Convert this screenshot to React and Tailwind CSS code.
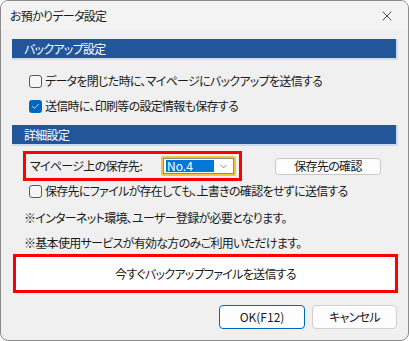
import { X, ChevronDown, Check } from "lucide-react";

const font = "[font-family:'Noto_Sans_CJK_JP','Noto_Sans',sans-serif] [font-feature-settings:'palt'] tracking-[-0.7px]";

function CheckBox({ checked }) {
  if (checked) {
    return (
      <span className="flex h-[13px] w-[13px] items-center justify-center rounded-[3px] bg-[#0067c0]">
        <Check className="h-[9px] w-[9px] text-white" strokeWidth={2} />
      </span>
    );
  }
  return <span className="h-[13px] w-[13px] rounded-[3px] border border-[#5a5a5a] bg-[#f6f6f6]" />;
}

function Row({ checked, label, className = "" }) {
  return (
    <div className={`flex h-[20px] items-center gap-[3px] pl-[17px] ${className}`}>
      <CheckBox checked={checked} />
      <span>{label}</span>
    </div>
  );
}

function SectionHeader({ title, className = "" }) {
  return (
    <div
      className={`flex h-[21px] items-start border-b-2 border-r-2 border-[#c9dcf2] ${className}`}
    >
      <div className="flex h-[19px] w-full items-center bg-[#23559a] pl-[12px] text-white">
        {title}
      </div>
    </div>
  );
}

export default function App() {
  return (
    <div
      className={`flex h-[341px] w-[409px] flex-col overflow-hidden rounded-[8px] border border-[#8c8c8c] bg-[#f0f0f0] text-[12px] leading-none text-[#1a1a1a] ${font}`}
    >
      <div className="flex h-[29px] items-center justify-between bg-[#f3f3f3] pl-[9px] pr-[13px]">
        <span>お預かりデータ設定</span>
        <X className="h-[16px] w-[16px] text-[#222]" strokeWidth={1.2} />
      </div>

      <div className="flex flex-col pl-[11px] pr-[10px]">
        <SectionHeader title="バックアップ設定" className="mt-[9px]" />
        <Row label="データを閉じた時に、マイページにバックアップを送信する" className="mt-[11px]" />
        <Row checked label="送信時に、印刷等の設定情報も保存する" className="mt-[5px]" />

        <SectionHeader title="詳細設定" className="mt-[9px]" />

        <div className="mt-[5px] flex items-center">
          <div className="ml-[11px] flex h-[30px] w-[219px] items-center justify-between border-[3px] border-[#ff0000] pl-[4px] pr-[3px]">
            <span>マイページ上の保存先:</span>
            <div className="flex h-[20px] w-[75px] items-center rounded-[2px] border-2 border-[#f7c440] bg-white">
              <div className="flex h-full w-full items-center border border-[#8a8a8a] pl-[2px] pr-[4px]">
                <span className="flex h-[12px] w-[48px] items-center bg-[#0078d7] pl-[1px] tracking-normal text-white">
                  No.4
                </span>
                <ChevronDown className="ml-auto h-[11px] w-[11px] text-[#555]" strokeWidth={1.5} />
              </div>
            </div>
          </div>
          <button className="ml-[33px] flex h-[17px] w-[106px] items-center justify-center rounded-[4px] border border-[#c8c8c8] bg-[#fdfdfd]">
            保存先の確認
          </button>
        </div>

        <Row label="保存先にファイルが存在しても、上書きの確認をせずに送信する" />

        <div className="mt-[7px] flex h-[20px] items-center pl-[12px]">
          ※インターネット環境、ユーザー登録が必要となります。
        </div>
        <div className="mt-[5px] flex h-[20px] items-center pl-[12px]">
          ※基本使用サービスが有効な方のみご利用いただけます。
        </div>

        <button className="ml-[1px] mt-[1px] flex h-[39px] w-[385px] items-center justify-center border-[3px] border-[#ff0000] bg-white">
          今すぐバックアップファイルを送信する
        </button>

        <div className="mt-[12px] flex justify-end gap-[7px] pr-[1px]">
          <button className="flex h-[24px] w-[86px] items-center justify-center rounded-[4px] border border-[#0067c0] bg-[#fdfdfd] tracking-normal">
            OK(F12)
          </button>
          <button className="flex h-[24px] w-[85px] items-center justify-center rounded-[4px] border border-[#d0d0d0] bg-[#fdfdfd]">
            キャンセル
          </button>
        </div>
      </div>
    </div>
  );
}
